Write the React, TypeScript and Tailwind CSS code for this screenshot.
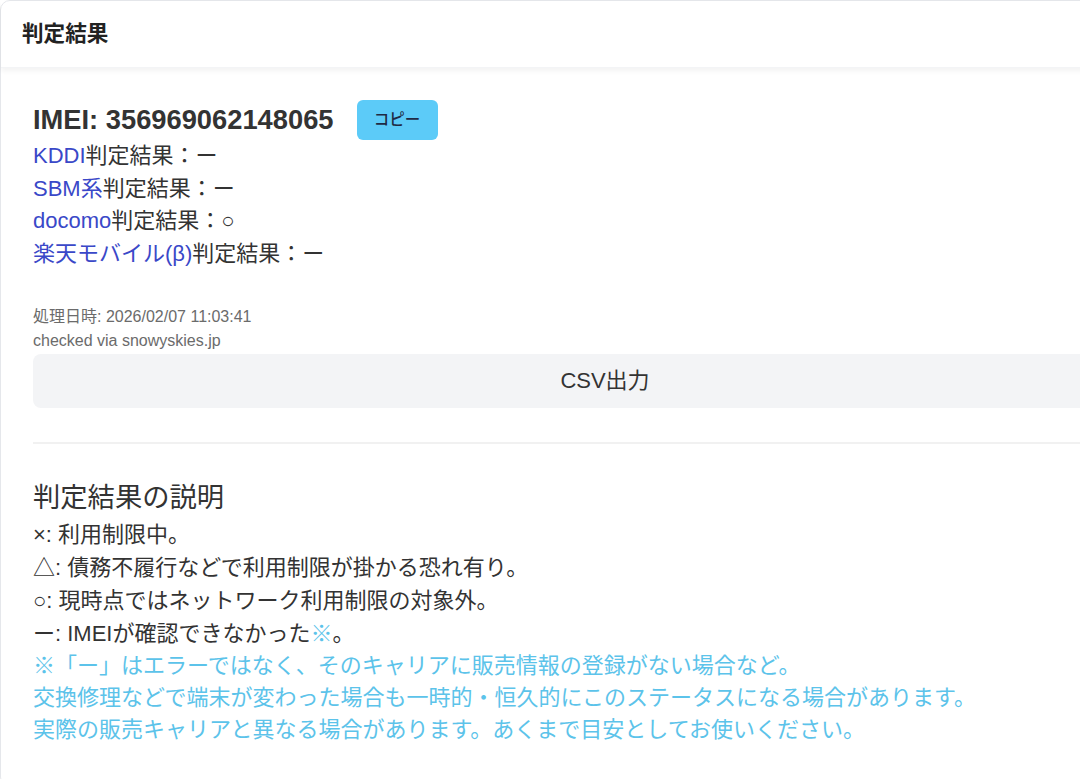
import React from 'react';

const font = { fontFamily: '"Liberation Sans", "Noto Sans CJK JP", sans-serif' };

const carriers = [
  { name: 'KDDI', result: 'ー' },
  { name: 'SBM系', result: 'ー' },
  { name: 'docomo', result: '○' },
  { name: '楽天モバイル(β)', result: 'ー' },
];

const legend = [
  { mark: '×', text: '利用制限中。' },
  { mark: '△', text: '債務不履行などで利用制限が掛かる恐れ有り。' },
  { mark: '○', text: '現時点ではネットワーク利用制限の対象外。' },
];

export default function App() {
  return (
    <div className="w-[1080px] h-[779px] overflow-hidden bg-white text-[#333]" style={font}>
      <div className="w-[1210px] rounded-[10px] border border-gray-200 bg-white">
        {/* Header */}
        <div className="h-[67px] flex items-center px-[21px] border-b border-gray-100 shadow-[0_3px_5px_rgba(0,0,0,0.05)]">
          <h1 className="text-[21.6px] font-bold text-[#222]">判定結果</h1>
        </div>

        {/* Body */}
        <div className="px-[32px] pt-[32px] pb-[40px]">
          <div className="flex items-center gap-[23px]">
            <h2 className="text-[27.3px] font-bold leading-[40px] text-[#333]">IMEI: 356969062148065</h2>
            <button className="h-[40px] w-[81px] rounded-md bg-[#5ccbf8] text-[15.5px] font-medium text-[#1f2a44]">
              コピー
            </button>
          </div>

          <div className="text-[22px] leading-[32.7px]">
            {carriers.map(c => (
              <div key={c.name}>
                <span className="text-[#3a48c8]">{c.name}</span>
                判定結果：{c.result}
              </div>
            ))}
          </div>

          <div className="mt-[34px] text-[16px] leading-[24px] text-[#6b6b6b]">
            <div>処理日時: 2026/02/07 11:03:41</div>
            <div>checked via snowyskies.jp</div>
          </div>

          <button className="w-full h-[54px] mt-[1px] rounded-lg bg-[#f3f4f6] text-[22px] text-[#333]">
            CSV出力
          </button>

          <div className="mt-[34px] border-t-2 border-[#f1f1f1]" />

          <h3 className="mt-[34px] text-[27.3px] leading-[40px]">判定結果の説明</h3>
          <div className="text-[22px] leading-[33px]">
            {legend.map(l => (
              <div key={l.text}>
                {l.mark}: {l.text}
              </div>
            ))}
            <div>
              ー: IMEIが確認できなかった<span className="text-[#5cc3ea]">※</span>。
            </div>
            <div className="text-[#5cc3ea] leading-[32px]">
              <div>※「ー」はエラーではなく、そのキャリアに販売情報の登録がない場合など。</div>
              <div>交換修理などで端末が変わった場合も一時的・恒久的にこのステータスになる場合があります。</div>
              <div>実際の販売キャリアと異なる場合があります。あくまで目安としてお使いください。</div>
            </div>
          </div>
        </div>
      </div>
    </div>
  );
}
